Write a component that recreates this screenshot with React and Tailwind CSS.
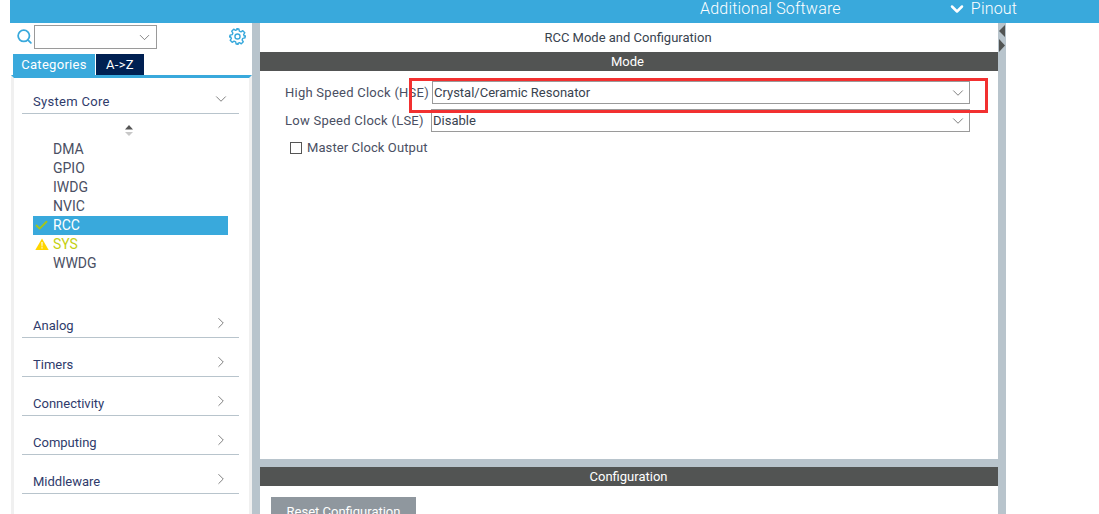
import React from 'react';
import { Search, ChevronDown, ChevronRight, Check } from 'lucide-react';

const items = ['DMA', 'GPIO', 'IWDG', 'NVIC', 'RCC', 'SYS', 'WWDG'];
const groups = ['Analog', 'Timers', 'Connectivity', 'Computing', 'Middleware'];

function Gear() {
    return (
        <svg width="17" height="17" viewBox="0 0 24 24" fill="none" stroke="#39a9dc" strokeWidth="2" strokeLinejoin="round">
            <circle cx="12" cy="12" r="3.6" />
            <path d="M10 1.5h4l.6 3 2.3 1 2.6-1.7 2.8 2.8-1.7 2.6 1 2.3 3 .6v0l-.1 0v0M22.5 10v4l-3 .6-1 2.3 1.7 2.6-2.8 2.8-2.6-1.7-2.3 1-.6 3h-0M14 22.5h-4l-.6-3-2.3-1-2.6 1.7-2.8-2.8 1.7-2.6-1-2.3-3-.6M1.5 14v-4l3-.6 1-2.3-1.7-2.6 2.8-2.8 2.6 1.7 2.3-1 .6-3" />
        </svg>
    );
}

function Select({ text, className }) {
    return (
        <div className={`flex items-center justify-between h-[23px] border border-[#9a9a9a] pl-[1px] pr-[2px] text-[13px] tracking-normal text-[#39434f] ${className}`}>
            <span>{text}</span>
            <ChevronDown size={18} strokeWidth={1} color="#555" />
        </div>
    );
}

export default function App() {
    return (
        <div className="relative w-[1099px] h-[514px] overflow-hidden bg-white pl-[10px] flex flex-col font-['Roboto',sans-serif]">
            <div className="h-[23px] shrink-0 bg-[#39a9dc] flex items-start text-white text-[16px] leading-[17px] font-light tracking-[0.2px]">
                <span className="ml-[690px]">Additional Software</span>
                <ChevronDown size={20} strokeWidth={3} className="ml-[106px] -mt-[1px]" />
                <span className="ml-[4px]">Pinout</span>
            </div>

            <div className="flex flex-1 min-h-0">
                <div className="w-[242px] shrink-0 flex flex-col">
                    <div className="h-[31px] flex items-start pt-[2px] pl-[6px]">
                        <Search size={17} strokeWidth={2.5} color="#39a9dc" className="mt-[3px]" />
                        <div className="ml-[1px] w-[123px] h-[24px] border border-[#9a9a9a] flex items-center justify-end pr-[3px]">
                            <ChevronDown size={17} strokeWidth={1} color="#555" />
                        </div>
                        <div className="ml-[72px] mt-[3px]"><Gear /></div>
                    </div>
                    <div className="flex h-[21px] pl-[3px] text-[13px] text-white tracking-[0.3px]">
                        <div className="w-[82px] bg-[#39a9dc] flex items-center justify-center">Categories</div>
                        <div className="ml-[1px] w-[48px] bg-[#002052] flex items-center justify-center">A-&gt;Z</div>
                    </div>
                    <div className="flex-1 ml-[1px] border-t-[3px] border-t-[#39a9dc] border-x-[3px] border-x-[#f0f0f0] pl-[8px] pr-[8px]">
                        <div className="h-[36px] flex items-end justify-between border-b border-[#b8c4cc] text-[13px] tracking-[0.3px] text-[#2f3b6b] pl-[11px] pb-[2px] w-[217px]">
                            <span>System Core</span>
                            <ChevronDown size={18} strokeWidth={1} color="#555" className="mr-[9px] mb-[3px]" />
                        </div>
                        <div className="flex justify-center w-[217px] h-[26px] pt-[11px] pr-[3px]">
                            <svg width="10" height="12" viewBox="0 0 10 12">
                                <path d="M5 0 9 4.5H1Z" fill="#555" />
                                <path d="M5 11 9 7H1Z" fill="#c8c8c8" />
                            </svg>
                        </div>
                        {items.map((item) => (
                            <div
                                key={item}
                                className={`flex items-center h-[19px] w-[195px] ml-[11px] pl-[20px] text-[14px] relative ${
                                    item === 'RCC' ? 'bg-[#39a9dc] text-white' : item === 'SYS' ? 'text-[#c4d012]' : 'text-[#4a4f63]'
                                }`}
                            >
                                {item === 'RCC' && <Check size={15} strokeWidth={3} color="#a4c61a" className="absolute left-[1px] top-[2px]" />}
                                {item === 'SYS' && (
                                    <svg width="14" height="12" viewBox="0 0 14 12" className="absolute left-[2px] top-[3px]">
                                        <path d="M7 .5 13.7 12H.3Z" fill="#ffd500" />
                                        <path d="M6.4 4h1.2l-.2 4.4h-.8ZM6.4 9.2h1.2v1.3H6.4Z" fill="#fff" />
                                    </svg>
                                )}
                                {item}
                            </div>
                        ))}
                        <div className="h-[26px]" />
                        {groups.map((group) => (
                            <div key={group} className="h-[39px] w-[217px] flex items-end justify-between border-b border-[#b8c4cc] text-[13px] text-[#2f3b6b] pl-[11px] pb-[1px]">
                                <span className="translate-y-[-1px]">{group}</span>
                                <ChevronRight size={18} strokeWidth={1} color="#555" className="mr-[9px] mb-[4px]" />
                            </div>
                        ))}
                    </div>
                </div>

                <div className="w-[8px] shrink-0 bg-[#b8c4cc]" />

                <div className="w-[738px] shrink-0 flex flex-col">
                    <div className="h-[29px] flex items-center justify-center pr-[2px] text-[13px] text-[#39434f]">RCC Mode and Configuration</div>
                    <div className="h-[19px] bg-[#525453] flex items-center justify-center pr-[3px] text-[13px] text-white">Mode</div>
                    <div className="flex-1 text-[13px] text-[#4a4f63] tracking-[0.25px]">
                        <div className="flex items-center h-[23px] mt-[10px] pl-[25px]">
                            <span className="w-[147px] shrink-0">High Speed Clock (HSE)</span>
                            <Select text="Crystal/Ceramic Resonator" className="w-[538px]" />
                        </div>
                        <div className="flex items-center h-[23px] mt-[5px] pl-[25px]">
                            <span className="w-[146px] shrink-0">Low Speed Clock (LSE)</span>
                            <Select text="Disable" className="w-[539px]" />
                        </div>
                        <div className="flex items-center h-[14px] mt-[9px] pl-[30px] tracking-[0.1px]">
                            <div className="w-[12px] h-[12px] border border-[#555]" />
                            <span className="ml-[5px]">Master Clock Output</span>
                        </div>
                    </div>
                    <div className="h-[8px] bg-[#b8c4cc]" />
                    <div className="h-[19px] bg-[#525453] flex items-center justify-center pr-[1px] text-[13px] text-white">Configuration</div>
                    <div className="h-[28px] pt-[11px] pl-[11px]">
                        <div className="w-[145px] h-[30px] bg-[#8f979e] text-white text-[13px] flex items-center justify-center">Reset Configuration</div>
                    </div>
                </div>

                <div className="relative w-[8px] shrink-0 bg-[#b8c4cc]">
                    <svg width="8" height="28" viewBox="0 0 8 28" className="absolute left-0 top-[1px]">
                        <path d="M7 1V13L1 7Z" fill="#525453" />
                        <path d="M1 15V28L7 21.5Z" fill="#525453" />
                    </svg>
                </div>
            </div>

            <div className="absolute left-[409px] top-[78px] w-[579px] h-[35px] border-[3px] border-[#f23030]" />
        </div>
    );
}
